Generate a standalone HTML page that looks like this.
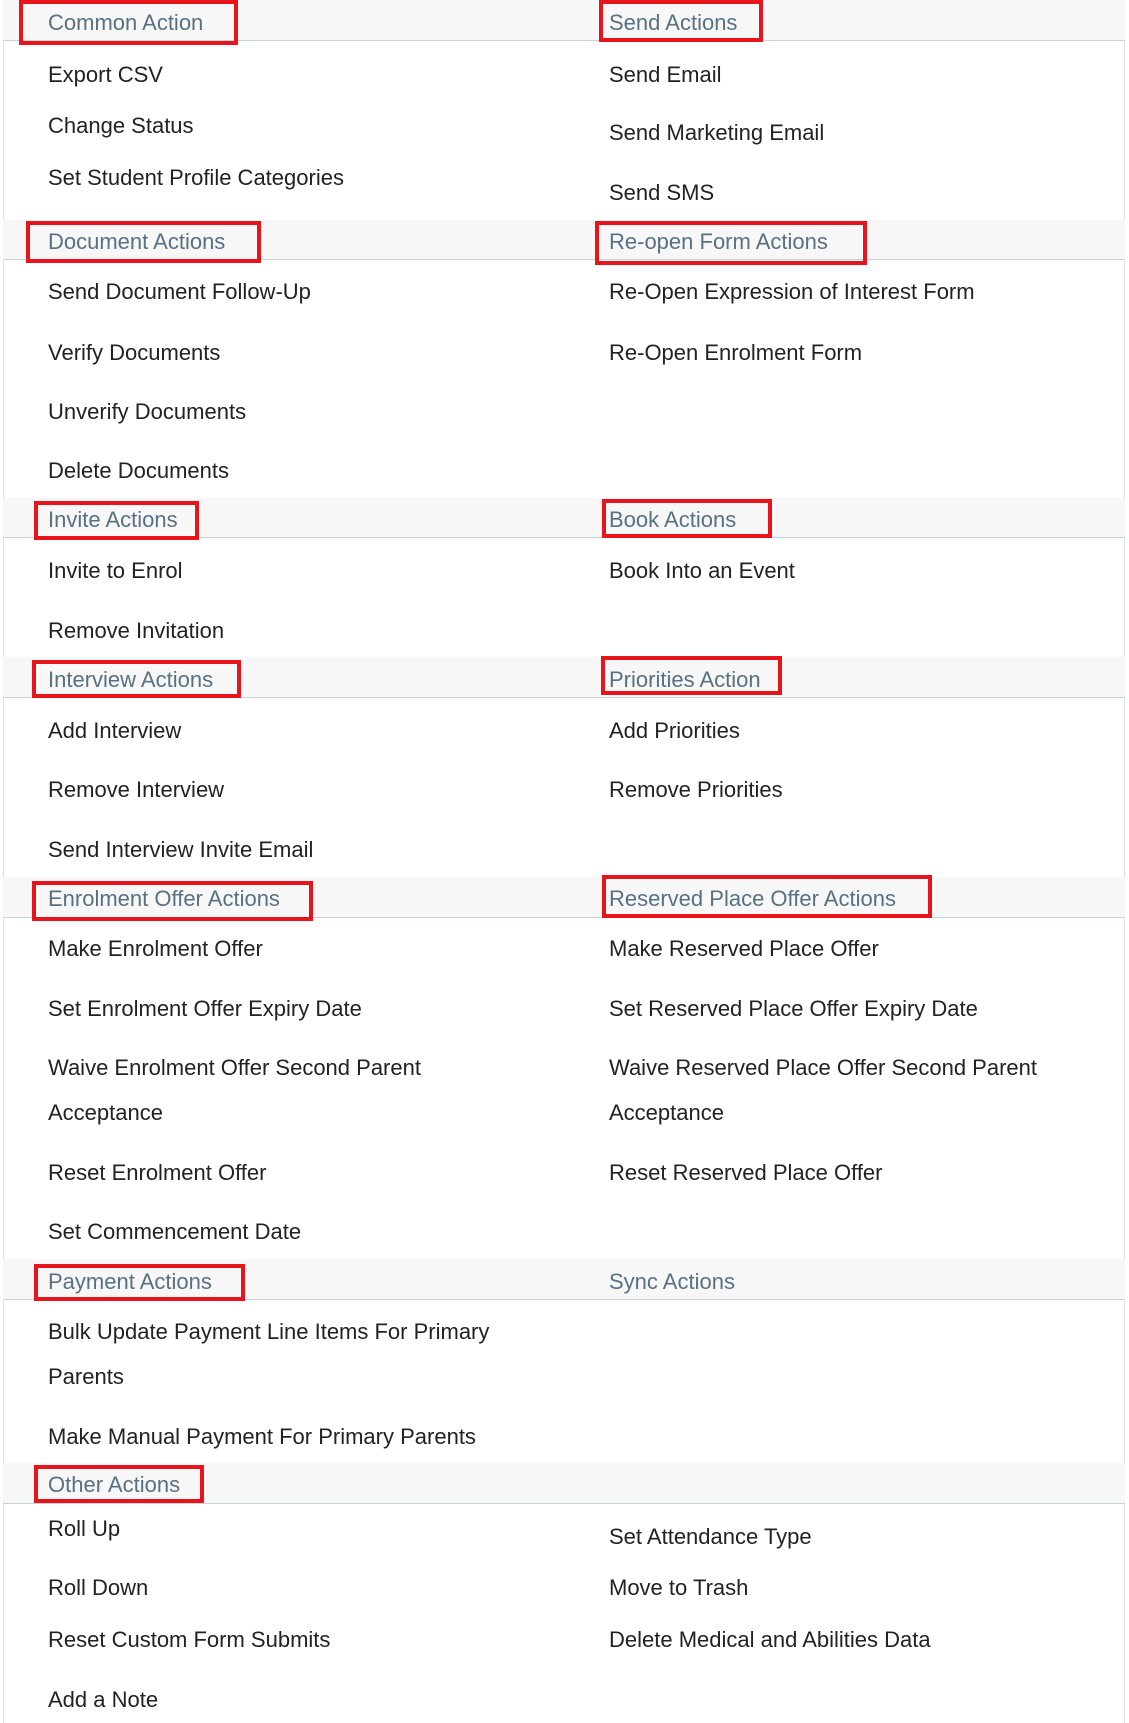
<!DOCTYPE html>
<html><head><meta charset="utf-8"><style>
html,body{margin:0;padding:0;background:#fff;width:1129px;height:1723px;overflow:hidden;position:relative;font-family:"Liberation Sans",sans-serif}
.panel{position:absolute;left:3px;top:0;width:1122px;height:1723px;background:#fff;border-left:1px solid #dde3e8;border-right:1px solid #dde3e8;border-top:2px solid #c8d4dc;box-sizing:border-box}
.band{position:absolute;left:3px;width:1122px;background:#f7f7f7;border-bottom:1px solid #c5d3dc;box-sizing:border-box}
.h{position:absolute;color:#587182;font-size:22px;line-height:26px;white-space:nowrap;margin-top:1px}
.t{position:absolute;color:#222;font-size:22px;line-height:26px;white-space:nowrap;margin-top:1px}
.r{position:absolute;border:4px solid #e8141c;box-sizing:border-box}
</style></head><body>
<div class="panel"></div>
<div class="band" style="top:0;height:41px"></div>
<div class="band" style="top:220px;height:40px"></div>
<div class="band" style="top:498px;height:40px"></div>
<div class="band" style="top:657px;height:41px"></div>
<div class="band" style="top:877px;height:41px"></div>
<div class="band" style="top:1259px;height:41px"></div>
<div class="band" style="top:1463px;height:41px"></div>

<div class="h" style="left:48px;top:9px">Common Action</div>
<div class="h" style="left:609px;top:9px">Send Actions</div>
<div class="t" style="left:48px;top:61px">Export CSV</div>
<div class="t" style="left:48px;top:112px">Change Status</div>
<div class="t" style="left:48px;top:164px">Set Student Profile Categories</div>
<div class="t" style="left:609px;top:61px">Send Email</div>
<div class="t" style="left:609px;top:119px">Send Marketing Email</div>
<div class="t" style="left:609px;top:179px">Send SMS</div>

<div class="h" style="left:48px;top:228px">Document Actions</div>
<div class="h" style="left:609px;top:228px">Re-open Form Actions</div>
<div class="t" style="left:48px;top:278px">Send Document Follow-Up</div>
<div class="t" style="left:48px;top:339px">Verify Documents</div>
<div class="t" style="left:48px;top:398px">Unverify Documents</div>
<div class="t" style="left:48px;top:457px">Delete Documents</div>
<div class="t" style="left:609px;top:278px">Re-Open Expression of Interest Form</div>
<div class="t" style="left:609px;top:339px">Re-Open Enrolment Form</div>

<div class="h" style="left:48px;top:506px">Invite Actions</div>
<div class="h" style="left:609px;top:506px">Book Actions</div>
<div class="t" style="left:48px;top:557px">Invite to Enrol</div>
<div class="t" style="left:48px;top:617px">Remove Invitation</div>
<div class="t" style="left:609px;top:557px">Book Into an Event</div>

<div class="h" style="left:48px;top:666px">Interview Actions</div>
<div class="h" style="left:609px;top:666px">Priorities Action</div>
<div class="t" style="left:48px;top:717px">Add Interview</div>
<div class="t" style="left:48px;top:776px">Remove Interview</div>
<div class="t" style="left:48px;top:836px">Send Interview Invite Email</div>
<div class="t" style="left:609px;top:717px">Add Priorities</div>
<div class="t" style="left:609px;top:776px">Remove Priorities</div>

<div class="h" style="left:48px;top:885px">Enrolment Offer Actions</div>
<div class="h" style="left:609px;top:885px">Reserved Place Offer Actions</div>
<div class="t" style="left:48px;top:935px">Make Enrolment Offer</div>
<div class="t" style="left:48px;top:995px">Set Enrolment Offer Expiry Date</div>
<div class="t" style="left:48px;top:1054px">Waive Enrolment Offer Second Parent</div>
<div class="t" style="left:48px;top:1099px">Acceptance</div>
<div class="t" style="left:48px;top:1159px">Reset Enrolment Offer</div>
<div class="t" style="left:48px;top:1218px">Set Commencement Date</div>
<div class="t" style="left:609px;top:935px">Make Reserved Place Offer</div>
<div class="t" style="left:609px;top:995px">Set Reserved Place Offer Expiry Date</div>
<div class="t" style="left:609px;top:1054px">Waive Reserved Place Offer Second Parent</div>
<div class="t" style="left:609px;top:1099px">Acceptance</div>
<div class="t" style="left:609px;top:1159px">Reset Reserved Place Offer</div>

<div class="h" style="left:48px;top:1268px">Payment Actions</div>
<div class="h" style="left:609px;top:1268px">Sync Actions</div>
<div class="t" style="left:48px;top:1318px">Bulk Update Payment Line Items For Primary</div>
<div class="t" style="left:48px;top:1363px">Parents</div>
<div class="t" style="left:48px;top:1423px">Make Manual Payment For Primary Parents</div>

<div class="h" style="left:48px;top:1471px">Other Actions</div>
<div class="t" style="left:48px;top:1515px">Roll Up</div>
<div class="t" style="left:48px;top:1574px">Roll Down</div>
<div class="t" style="left:48px;top:1626px">Reset Custom Form Submits</div>
<div class="t" style="left:48px;top:1686px">Add a Note</div>
<div class="t" style="left:609px;top:1523px">Set Attendance Type</div>
<div class="t" style="left:609px;top:1574px">Move to Trash</div>
<div class="t" style="left:609px;top:1626px">Delete Medical and Abilities Data</div>

<div class="r" style="left:19px;top:0;width:219px;height:45px"></div>
<div class="r" style="left:599px;top:0;width:164px;height:42px"></div>
<div class="r" style="left:26px;top:221px;width:235px;height:42px"></div>
<div class="r" style="left:595px;top:221px;width:272px;height:44px"></div>
<div class="r" style="left:34px;top:501px;width:165px;height:39px"></div>
<div class="r" style="left:602px;top:499px;width:170px;height:39px"></div>
<div class="r" style="left:32px;top:660px;width:209px;height:38px"></div>
<div class="r" style="left:601px;top:656px;width:181px;height:39px"></div>
<div class="r" style="left:32px;top:881px;width:281px;height:40px"></div>
<div class="r" style="left:602px;top:875px;width:330px;height:43px"></div>
<div class="r" style="left:34px;top:1264px;width:211px;height:37px"></div>
<div class="r" style="left:34px;top:1465px;width:170px;height:38px"></div>
</body></html>
